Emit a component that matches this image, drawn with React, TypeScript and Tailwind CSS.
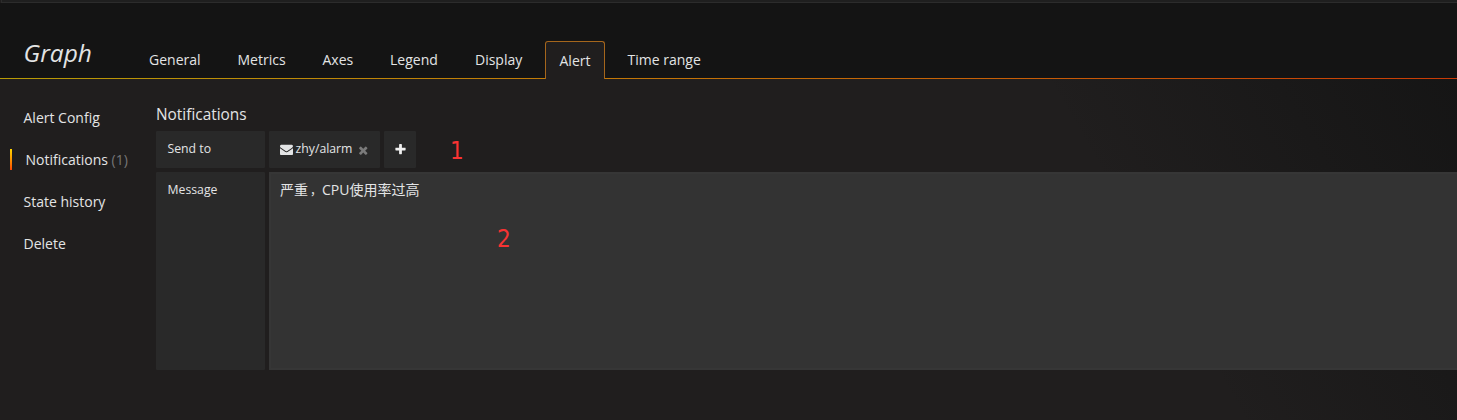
import React from "react";

const envelope =
  "M1792 710v794q0 66-47 113t-113 47h-1472q-66 0-113-47t-47-113v-794q44 49 101 87 362 246 497 345 57 42 92.5 65.5t94.5 48 110 24.5h2q51 0 110-24.5t94.5-48 92.5-65.5q170-123 498-345 57-39 100-87zm0-294q0 79-49 151t-122 123q-376 261-468 325-10 7-42.5 31t-54 38.5-52 32.5-57.5 27-50 9h-2q-23 0-50-9t-57.5-27-52-32.5-54-38.5-42.5-31q-91-64-262-182.5t-205-142.5q-62-42-117-115.5t-55-136.5q0-78 41.5-130t118.5-52h1472q65 0 112.5 47t47.5 113z";
const times =
  "M1490 1322q0 40-28 68l-136 136q-28 28-68 28t-68-28l-294-294-294 294q-28 28-68 28t-68-28l-136-136q-28-28-28-68t28-68l294-294-294-294q-28-28-28-68t28-68l136-136q28-28 68-28t68 28l294 294 294-294q28-28 68-28t68 28l136 136q28 28 28 68t-28 68l-294 294 294 294q28 28 28 68z";
const plus =
  "M1600 736v192q0 40-28 68t-68 28h-416v416q0 40-28 68t-68 28h-192q-40 0-68-28t-28-68v-416h-416q-40 0-68-28t-28-68v-192q0-40 28-68t68-28h416v-416q0-40 28-68t68-28h192q40 0 68 28t28 68v416h416q40 0 68 28t28 68z";

function Icon({ d, className }: { d: string; className: string }) {
  return (
    <svg viewBox="0 0 1792 1792" fill="currentColor" className={className}>
      <path d={d} />
    </svg>
  );
}

function Tab({ label, className }: { label: string; className: string }) {
  return <a className={`block h-[38px] shrink-0 pt-[9px] ${className}`}>{label}</a>;
}

export default function App() {
  return (
    <div className="flex h-[420px] w-full flex-col overflow-hidden bg-[#201e1e] font-['Open_Sans','Noto_Sans_CJK_SC',sans-serif] text-[14px] leading-[21px] text-[#e3e4e5]">
      <div className="ml-px h-[3px] shrink-0 border-b border-l border-[#2c2c2c] bg-[#1f1f1f]" />
      <header className="flex h-[76px] shrink-0 flex-col bg-[#141414]">
        <div className="flex h-[75px] items-end whitespace-nowrap">
          <h2 className="h-[46px] w-[149px] shrink-0 pl-[23.5px] pt-[4px] text-[24.5px] italic leading-[34px]">Graph</h2>
          <Tab label="General" className="w-[88.5px]" />
          <Tab label="Metrics" className="w-[85px]" />
          <Tab label="Axes" className="w-[67.5px]" />
          <Tab label="Legend" className="w-[85px]" />
          <Tab label="Display" className="w-[70px]" />
          <a className="relative z-10 -mb-px block h-[38px] w-[60px] shrink-0 rounded-t-[3px] border border-b-0 border-[#a5661c] bg-[#201e1e] pl-[13.5px] pt-[8px]">
            Alert
          </a>
          <Tab label="Time range" className="ml-[22.5px]" />
        </div>
        <div className="h-px bg-linear-to-r from-[#b89b06] to-[#c83a06]" />
      </header>
      <main className="flex grow bg-[linear-gradient(60deg,transparent_75%,#141414_103%)]">
        <aside className="flex w-[156px] shrink-0 flex-col gap-[21px] whitespace-nowrap pl-[10px] pt-[28px]">
          <a className="pl-[13.5px]">Alert Config</a>
          <a className="flex">
            <span className="mr-[13.5px] h-[21px] w-0.5 bg-linear-to-b from-[#ffd500] to-[#ff4400]" />
            <span>
              Notifications <span className="text-[#767677]">(1)</span>
            </span>
          </a>
          <a className="pl-[13.5px]">State history</a>
          <a className="pl-[13.5px]">Delete</a>
        </aside>
        <section className="min-w-0 grow">
          <h5 className="h-[52px] pt-[25px] text-[15.4px] leading-[21px]">Notifications</h5>
          <div className="flex h-[37px] gap-1 text-[12.25px] leading-[18px]">
            <div className="w-[109px] rounded-[1px] bg-[#292929] pl-[11.5px] pt-[9px]">Send to</div>
            <div className="flex w-[111px] rounded-[1px] bg-[#292929] pl-[11px] pt-[9px]">
              <Icon d={envelope} className="mt-[3px] h-[13px] w-[13px]" />
              <span className="ml-[2.5px] w-[61px]">zhy/alarm</span>
              <Icon d={times} className="ml-[0.5px] mt-[4px] h-[12.5px] w-[12.5px] text-[#7b7b7b]" />
            </div>
            <div className="w-[32px] rounded-[1px] bg-[#292929] pl-[9.5px] pt-[12px]">
              <Icon d={plus} className="h-[13px] w-[13px] text-[#f0f0f0]" />
            </div>
            <span className="ml-[30px] pt-[6px] font-['DejaVu_Sans_Condensed','DejaVu_Sans',sans-serif] text-[24px] leading-[28px] text-[#f93333] [font-stretch:condensed]">
              1
            </span>
          </div>
          <div className="mt-1 flex h-[198px] gap-1">
            <div className="w-[109px] shrink-0 rounded-[1px] bg-[#292929] pl-[11.5px] pt-[9px] text-[12.25px] leading-[18px]">Message</div>
            <div className="grow border-2 border-r-0 border-[#363636] bg-[#333333] pl-[9px] pt-[5px]">
              <p className="h-[21px] leading-[21px]">
                严重<span className="ml-[2px] text-[12px]">，</span>CPU使用率过高
              </p>
              <p className="ml-[217px] mt-[25px] font-['DejaVu_Sans_Condensed','DejaVu_Sans',sans-serif] text-[24px] leading-[28px] text-[#f93333] [font-stretch:condensed]">
                2
              </p>
            </div>
          </div>
        </section>
      </main>
    </div>
  );
}
